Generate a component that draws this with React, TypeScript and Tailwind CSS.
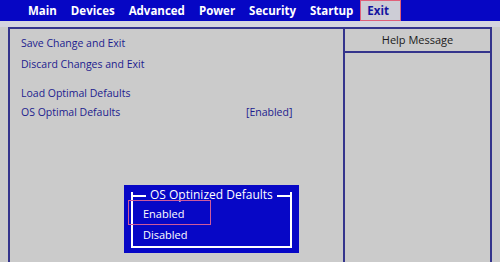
const menu = ['Main', 'Devices', 'Advanced', 'Power', 'Security', 'Startup', 'Exit']

export default function App() {
  return (
    <div
      className="relative w-[500px] h-[262px] overflow-hidden bg-[#cbcbcb]"
      style={{ fontFamily: '"Open Sans", "Noto Sans", sans-serif' }}
    >
      {/* top menu bar */}
      <div className="h-[21px] bg-[#0606c4] flex items-center pl-[28px] gap-[14px] text-[11.5px] font-bold text-white leading-none">
        {menu.map((m) =>
          m === 'Exit' ? (
            <span
              key={m}
              className="h-[21px] -ml-[7px] pl-[6px] pr-[11px] flex items-center bg-[#cdcdd6] text-[#1414a0] border border-[#e0607a]"
            >
              {m}
            </span>
          ) : (
            <span key={m}>{m}</span>
          ),
        )}
      </div>
      <div className="h-[6px] bg-[#d4d4e0]" />

      {/* main panel */}
      <div className="mx-[8px] h-[240px] border-t-2 border-l-2 border-r-2 border-[#34348c] flex text-[10.5px] text-[#1c1c8e]">
        <div className="w-[335px] border-r-2 border-[#34348c] pl-[11px] pt-[4px] leading-[20px]">
          <div>Save Change and Exit</div>
          <div className="mt-[1px]">Discard Changes and Exit</div>
          <div className="mt-[9px]">Load Optimal Defaults</div>
          <div className="flex -mt-[1px]">
            <span className="w-[225px]">OS Optimal Defaults</span>
            <span>[Enabled]</span>
          </div>
        </div>
        <div className="flex-1 flex flex-col">
          <div className="h-[24px] border-b-2 border-[#34348c] flex items-center justify-center text-[11px] text-[#1a1a1a]">
            Help Message
          </div>
        </div>
      </div>

      {/* option popup */}
      <div className="absolute left-[124px] top-[185px] w-[175px] h-[68px] bg-[#0707c6] p-[7px] pb-[5px]">
        <div className="relative h-full border-l-2 border-r-2 border-b-2 border-white text-[11px] text-white">
          <div className="absolute -top-[1px] left-0 right-0 flex items-center">
            <div className="w-[15px] h-[2px] bg-white -ml-[2px]" />
            <span className="px-[4px] -mt-[2px] leading-none text-[12px]">OS Optinized Defaults</span>
            <div className="flex-1 h-[2px] bg-white -mr-[2px]" />
          </div>
          <div className="absolute left-[-5px] top-[8px] w-[83px] h-[25px] border border-[#d05a9a]" />
          <div className="pl-[10px] pt-[11px] leading-[21px]">
            <div>Enabled</div>
            <div>Disabled</div>
          </div>
        </div>
      </div>
    </div>
  )
}
